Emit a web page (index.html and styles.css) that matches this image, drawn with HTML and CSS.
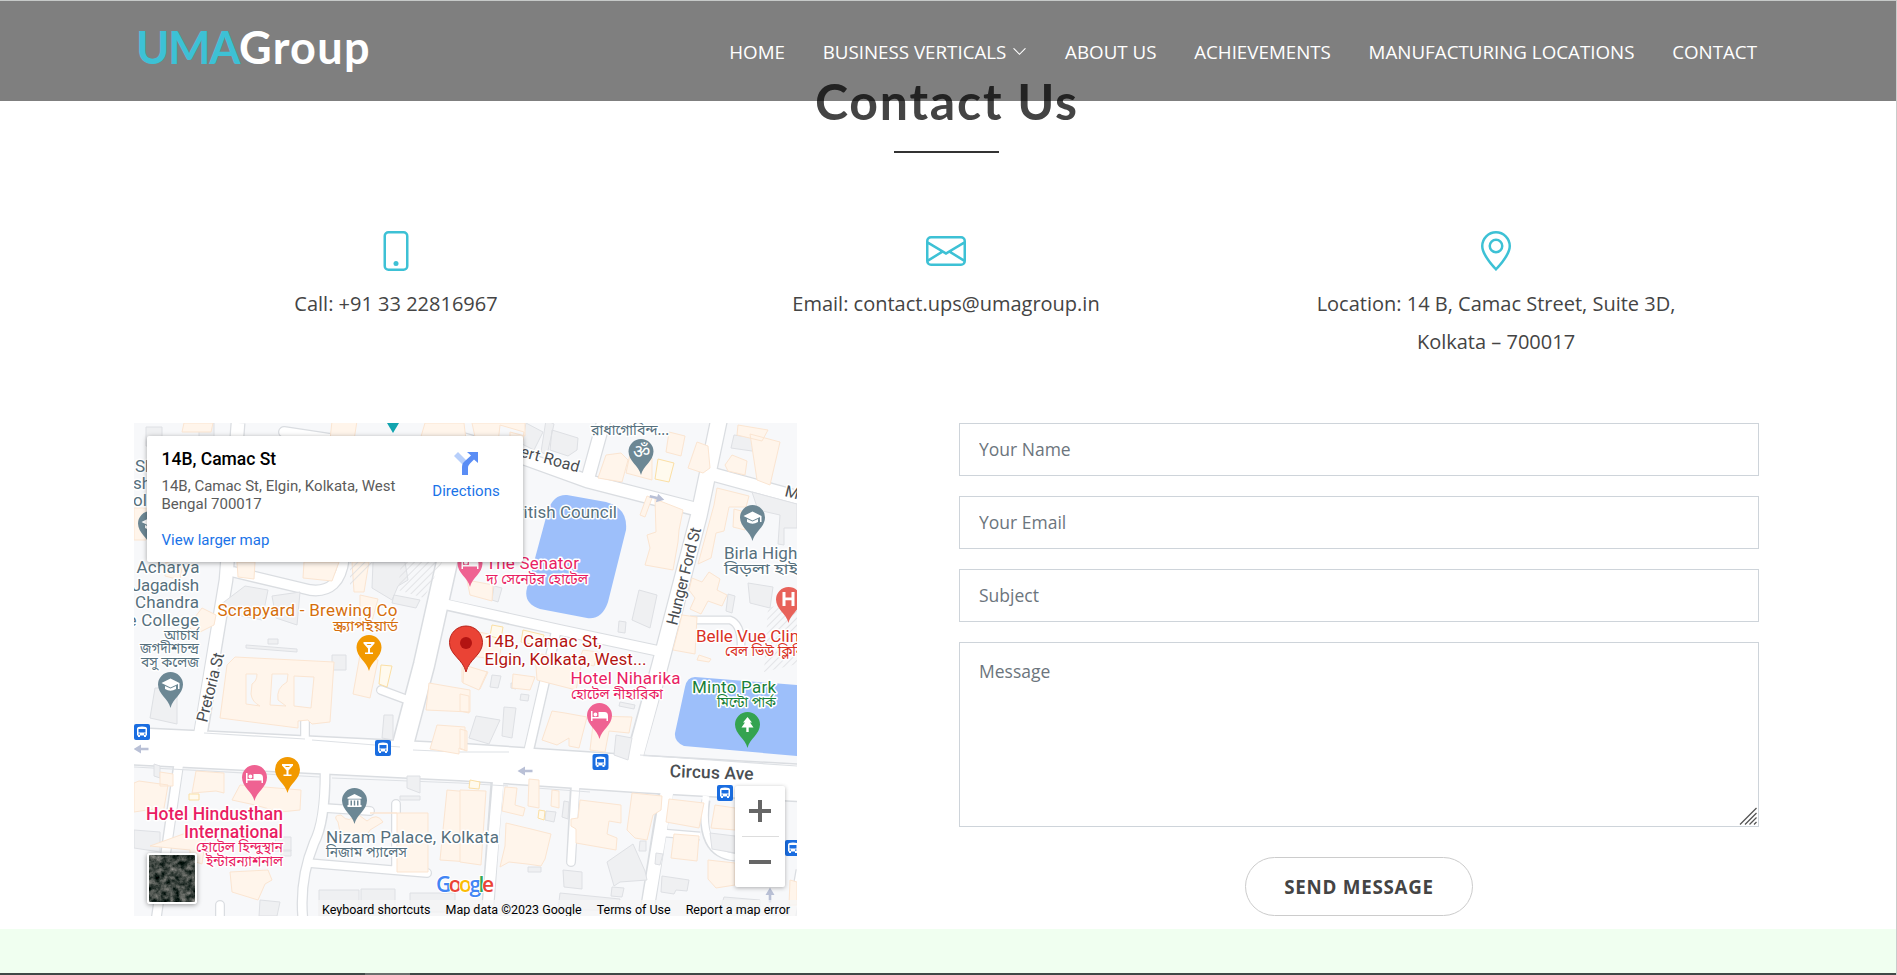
FILE: index.html
```html
<!DOCTYPE html>
<html lang="en">
<head>
<meta charset="utf-8">
<title>UMAGroup - Contact Us</title>
<link rel="stylesheet" href="styles.css">
</head>
<body>
<header class="header">
  <a class="logo"><span>UMA</span>Group</a>
  <nav class="nav">
    <a>HOME</a>
    <a class="has-menu">BUSINESS VERTICALS <svg width="15" height="15" viewBox="0 0 16 16"><path fill="none" stroke="#fff" stroke-width="1.2" stroke-linecap="round" d="M2 5l6 6 6-6"/></svg></a>
    <a>ABOUT US</a>
    <a>ACHIEVEMENTS</a>
    <a>MANUFACTURING LOCATIONS</a>
    <a>CONTACT</a>
  </nav>
</header>

<main class="contact">
  <h2 class="title"><span>Contact Us</span></h2>
  <div class="info">
    <div class="info-item">
      <svg class="icon" viewBox="0 0 16 16"><path d="M11 1a1 1 0 0 1 1 1v12a1 1 0 0 1-1 1H5a1 1 0 0 1-1-1V2a1 1 0 0 1 1-1h6zM5 0a2 2 0 0 0-2 2v12a2 2 0 0 0 2 2h6a2 2 0 0 0 2-2V2a2 2 0 0 0-2-2H5z"/><path d="M8 14a1 1 0 1 0 0-2 1 1 0 0 0 0 2z"/></svg>
      <p>Call: +91 33 22816967</p>
    </div>
    <div class="info-item">
      <svg class="icon" viewBox="0 0 16 16"><path d="M0 4a2 2 0 0 1 2-2h12a2 2 0 0 1 2 2v8a2 2 0 0 1-2 2H2a2 2 0 0 1-2-2V4Zm2-1a1 1 0 0 0-1 1v.217l7 4.2 7-4.2V4a1 1 0 0 0-1-1H2Zm13 2.383-4.708 2.825L15 11.105V5.383Zm-.034 6.876-5.64-3.471L8 9.583l-1.326-.795-5.64 3.47A1 1 0 0 0 2 13h12a1 1 0 0 0 .966-.741ZM1 11.105l4.708-2.897L1 5.383v5.722Z"/></svg>
      <p>Email: contact.ups@umagroup.in</p>
    </div>
    <div class="info-item">
      <svg class="icon" viewBox="0 0 16 16"><path d="M12.166 8.94c-.524 1.062-1.234 2.12-1.96 3.07A31.493 31.493 0 0 1 8 14.58a31.481 31.481 0 0 1-2.206-2.57c-.726-.95-1.436-2.008-1.96-3.07C3.304 7.867 3 6.862 3 6a5 5 0 0 1 10 0c0 .862-.305 1.867-.834 2.94zM8 16s6-5.686 6-10A6 6 0 0 0 2 6c0 4.314 6 10 6 10z"/><path d="M8 8a2 2 0 1 1 0-4 2 2 0 0 1 0 4zm0 1a3 3 0 1 0 0-6 3 3 0 0 0 0 6z"/></svg>
      <p>Location: 14 B, Camac Street, Suite 3D,<br>Kolkata – 700017</p>
    </div>
  </div>

  <div class="row">
    <div class="map">
      <svg class="map-canvas" width="663" height="493" viewBox="134 423 663 493">
        <defs>
          <path id="pin" d="M0 0C-2-9-12.500-14-12.500-23.500A12.500 12.500 0 1 1 12.500-23.500C12.500-14 2-9 0 0Z"/>
          <g id="bus"><rect x="-8" y="-8" width="16" height="16" rx="2" fill="#1a6de0"/><path fill="#fff" d="M-5-3.500Q-5-5.500 0-5.500T5-3.500V3.500H4V5H2V3.500H-2V5H-4V3.500H-5Z"/><path fill="#1a6de0" d="M-3.500-3h7v3.500h-7zM-3.500 1.600h1.500v1.200h-1.500zM2 1.600h1.500v1.200h-1.500z"/></g>
          <path id="cap" fill="#fff" d="M-9-25L0-29.500L9-25V-19H7.500V-24L0-20.500ZM-5.500-22L0-19.500L5.500-22V-19Q0-15.500 -5.500-19Z"/>
          <path id="bed" fill="#fff" d="M-8.500-28H-7V-22H-1V-27H5Q8.500-27 8.500-23V-18H7V-20.500H-7V-18H-8.500ZM-6-24.500a1.900 1.900 0 1 1 3.800 0a1.900 1.900 0 1 1-3.800 0Z"/>
          <path id="glass" fill="#fff" d="M-5.500-29H5.500V-27.500L1-22.500V-18.500H4V-17H-4V-18.500H-1V-22.500L-5.500-27.500ZM-2.500-27L-1.500-26H1.500L2.500-27Z"/>
          <path id="arrow" fill="#b9c0d6" d="M-7.500 0L0-4.500V-1.300H7.500V1.300H0V4.500Z"/>
          <pattern id="hatch" width="5" height="5" patternUnits="userSpaceOnUse" patternTransform="rotate(45)"><path d="M0 0V5" stroke="#dcdee1" stroke-width="1.500"/></pattern>
        </defs>
        <rect x="134" y="423" width="663" height="493" fill="#f7f8fa"/>

        <!-- road casings and fills share the same geometry -->
        <g fill="none" stroke-linejoin="round">
          <g stroke="#dadde1">
            <path stroke-width="39" d="M130 746L460 762L640 774L800 783"/>
            <path stroke-width="15" d="M238 423L226 580L201 732"/>
            <path stroke-width="12" stroke-linecap="round" d="M234 572L310 590Q340 594 344 558M284 432L390 448"/>
            <path stroke-width="23" d="M462 500L447 562L424 665L402 748"/>
            <path stroke-width="12" d="M442 604L560 630L668 653"/>
            <path stroke-width="18" d="M719 420L699 515L660 665L634 758"/>
            <path stroke-width="11" d="M556 632L529 750"/>
            <path stroke-width="15" d="M430 430L510 453L587 481L695 509M712 474L800 498M604 420L588 478"/>
            <path stroke-width="10" stroke-linecap="round" d="M381 690L405 699M305 722V738"/>
            <path stroke-width="11" d="M178 768L156 920"/>
            <path stroke-width="11" d="M325 770Q326 820 314 843Q299 880 303 920"/>
            <path stroke-width="10" stroke-linecap="round" d="M326 808L370 811M308 863L427 873M396 804V868M220 905V920"/>
            <path stroke-width="13" d="M497 782L488 905"/>
            <path stroke-width="10" stroke-linecap="round" d="M575 785L571 862"/>
            <path stroke-width="15" d="M666 790L648 905"/>
            <path stroke-width="9" d="M664 833L700 836M706 800Q698 854 735 857M690 620H730Q742 624 741 650M800 870L792 916"/>
          </g>
          <g stroke="#fff">
            <path stroke-width="36" d="M130 746L460 762L640 774L800 783"/>
            <path stroke-width="12.500" d="M238 423L226 580L199 742"/>
            <path stroke-width="9.500" stroke-linecap="round" d="M234 572L310 590Q340 594 344 558M284 432L390 448"/>
            <path stroke-width="20" d="M462 500L447 562L424 665L400 756"/>
            <path stroke-width="9.500" d="M440 603L560 630L668 653"/>
            <path stroke-width="15.500" d="M719 420L699 515L660 665L632 768"/>
            <path stroke-width="8.500" d="M556 632L526 762"/>
            <path stroke-width="12.500" d="M430 430L510 453L587 481L700 510M708 473L800 498M604 420L588 478"/>
            <path stroke-width="7.500" stroke-linecap="round" d="M381 690L408 700M305 722V742"/>
            <path stroke-width="8.500" d="M180 756L156 920M325 762Q326 820 314 843Q299 880 303 920"/>
            <path stroke-width="7.500" stroke-linecap="round" d="M324 808L370 811M308 863L427 873M396 804V868M220 905V920"/>
            <path stroke-width="10.500" d="M499 772L488 905"/>
            <path stroke-width="7.500" stroke-linecap="round" d="M576 780L571 862"/>
            <path stroke-width="12.500" d="M669 780L648 905"/>
            <path stroke-width="6.500" d="M664 833L700 836M706 796Q698 854 735 857M688 620H730Q742 624 741 650M800 870L792 916"/>
          </g>
        </g>
        <g fill="none" stroke="#dee1e5" stroke-width="1.200">
          <path d="M204 733L305 739M312 740L400 747M134 767L320 777M332 778L460 783L508 786M536 788L590 792M413 750L460 752H509M640 755L797 766"/>
        </g>

        <g fill="#eff0f2" stroke="#dee0e4">
          <path d="M146 427H162V446H146ZM199 423H214V470H199ZM220 605L245 586L268 590L262 620L236 615ZM272 596L300 592L297 625L276 618ZM373 562H405L408 580L398 586L392 600L372 588ZM394 595L420 600L416 608L392 603ZM332 655H346V670H332ZM246 645L297 649V652L246 648ZM268 639H278V644H268Z"/>
          <path d="M552 430L578 438L577 450L568 456L550 450ZM546 420L554 424L547 455L541 452ZM526 423L543 432L534 450L522 444Z"/>
          <path d="M734 435L762 439L759 452L731 448ZM752 492L797 504V528H784V545L778 544L780 515L758 510ZM639 590L657 595L650 628L632 620ZM748 583L773 587L770 608L750 603ZM728 594L735 596L732 613L726 611ZM619 621L626 622L625 633L618 632ZM494 586L502 588L498 602L492 600Z"/>
          <path d="M155 688H177V724L150 718ZM384 715H393V740L382 738ZM154 764L160 766V778L154 776ZM407 776H420V793L407 788ZM400 796H420V800H400ZM476 716L500 720L489 744L469 738ZM504 707L516 708L512 738L502 736ZM492 675L501 676L498 688L490 687ZM616 735L632 738L628 760L614 755ZM620 702L635 705L634 709L619 706ZM511 683L517 684L516 689L511 688ZM521 694L529 695L528 701L520 700Z"/>
          <path d="M607 862L633 844L645 871L647 880L620 882L614 886ZM546 811L556 812L554 822L545 820ZM564 801L569 802L568 819L562 817ZM640 841H646V851H639ZM656 853L663 854L660 865L655 864ZM563 870L582 872V889L564 887ZM528 867H541V872H528ZM612 887L624 888L622 897L611 896ZM662 876L689 880L687 891L676 890L674 894L661 892ZM560 893L620 899L617 910H558ZM319 890H359V916H319ZM361 889H395V916H361ZM410 893H455V912H410ZM724 897L760 900V910H720ZM260 900L280 902L277 916H259ZM281 850H291V856H281ZM276 837H291V851H274ZM710 833L735 836V853L712 849ZM134 830L160 832V852L134 848Z"/>
        </g>

        <g fill="#fff5eb" stroke="#fbe5d1">
          <path d="M332 421H357L354 440H330ZM425 423H464L466 440H420ZM472 423L477 446L510 448V432L525 436V423ZM184 423H213L211 432H182ZM134 508H146V540H134ZM500 425L524 432L520 460L497 452Z"/>
          <path d="M237 562H255L254 579L238 577ZM304 562H339L332 581L303 578ZM352 562H369L364 592H354ZM360 595L378 599L370 628H360ZM202 608L216 615L214 625L196 634L188 626ZM166 562L182 567L180 580L165 576Z"/>
          <path d="M669 432L685 436L681 456L666 452ZM708 446L697 442L688 468L703 473L710 468ZM738 425L768 430L762 441L737 435ZM750 434L780 442L770 485L757 480ZM732 455L747 461L745 475L728 471L725 465ZM628 460L621 453L606 455L598 478L622 482ZM630 454L652 458V480L626 473Z"/>
          <path d="M655 499L683 510L679 530L678 542L673 570L645 565L650 548L647 535L656 532ZM647 496L652 498L645 517L640 515ZM717 488L749 496L746 507L729 507L724 531L716 533L711 558L698 564L714 505ZM734 509L745 512V530L733 527ZM692 578L702 582L709 572L720 579L717 590L727 595L722 606L708 601L701 614L690 609L695 598L689 590Z"/>
          <path d="M682 615L697 617L695 654L673 650ZM493 585L467 580L470 595L492 601ZM469 630L503 637L499 660L465 655ZM583 650L598 652L594 666L578 662ZM535 653L582 661L576 690L537 680ZM699 655L711 659L709 662L697 660ZM462 667L488 672L480 689L462 682Z"/>
          <path fill-rule="evenodd" d="M227 665L235 657L334 662L330 722L312 724L308 720L298 721V728L220 718ZM246 674H257Q257 681 252 684L251 694Q252 702 260 706L246 704ZM272 674H288L287 682Q276 688 278 700L286 706L270 705ZM294 676L314 677L311 708L294 706Z"/>
          <path d="M360 655L378 660L370 698L353 694ZM429 683L452 687L470 690V712L426 710ZM437 725L465 727V750L459 748V754L430 749ZM464 665L487 672L479 690L463 683ZM460 694L469 696V713L460 711ZM460 729L467 731V751L460 749ZM513 674L535 677L530 690L512 688ZM552 711L565 713L587 717L579 748L569 746V738L557 745L542 740ZM594 716L632 717L629 733L609 731L605 752L590 750Z"/>
          <path d="M160 772L173 774V786H160ZM196 771L224 773V793L216 791L192 793ZM139 781L168 785L163 814L154 809L134 812V783ZM240 785L301 790L300 810L280 812L255 805L232 800ZM338 822Q332 815 341 815Q350 825 356 813L367 821Q377 812 383 822L370 830L365 838L340 832ZM370 813H428V872H397V813ZM447 790L470 792V862L440 860ZM186 833L206 835L202 864L190 860V850L150 846ZM230 872L268 870L272 880L265 884L258 900L232 892Z"/>
          <path d="M460 790L486 791L481 865L460 862ZM505 787L517 788L515 805L525 808L523 816L502 811ZM529 779L539 780V808L528 806ZM552 790L559 791V808L551 806ZM632 793L662 796L661 810L653 815L647 840L635 838L627 830L630 808ZM580 800L621 805V823L609 821L607 834L617 838L616 850L576 843V829L571 826V819L578 818ZM669 799L704 803L699 828L666 822ZM674 834L699 836L697 861L671 858ZM715 805L735 808V830L711 828ZM506 823L531 829L551 834L545 859L541 866L527 864L509 862L500 867L505 846ZM708 860L735 863V885L716 888L708 879ZM790 880L797 882V905H789Z"/>
        </g>
        <g fill="#fffaee" stroke="#fbdfa4">
          <path d="M658 459L674 463L669 482L655 479ZM492 625L503 627L501 639L490 636ZM523 630L544 635L541 646L521 642ZM381 665L392 666L387 687L379 684ZM189 794H199V800H189ZM470 780L480 782L479 789L469 788ZM539 810L545 811L544 820L538 818Z"/>
        </g>
        <path fill="url(#hatch)" d="M350 562H376L350 590ZM401 562H442L424 598L398 590ZM768 608L797 600V664L764 672Z"/>

        <g fill="#9dbffa">
          <path d="M548 510Q554 494 567 495L606 502Q628 508 626 530L608 602Q602 620 587 618L540 609Q523 603 527 588Z"/>
          <path d="M685 687Q687 677 695 677L797 685V756L684 746Q674 742 675 733Z"/>
        </g>

        <use href="#arrow" transform="translate(141 749)"/>
        <use href="#arrow" transform="translate(525 771)"/>
        <use href="#arrow" transform="translate(657 498) rotate(194)"/>
        <use href="#arrow" transform="translate(770 895) rotate(90)"/>

        <g class="lbl slate">
          <text x="135" y="472">Sh</text><text x="133" y="489">sh</text><text x="133" y="506">ol</text>
          <text x="136.500" y="573" textLength="63">Acharya</text>
          <text x="132" y="590.500" textLength="67">Jagadish</text>
          <text x="135" y="608" textLength="64">Chandra</text>
          <text x="127.500" y="625.500" textLength="71.500">e College</text>
          <text x="507" y="517.500" textLength="110">British Council</text>
          <text x="724" y="559">Birla High School</text>
          <text x="326" y="843" textLength="173">Nizam Palace, Kolkata</text>
        </g>
        <g class="lbl bn slate">
          <text x="164" y="640" textLength="35" lengthAdjust="spacingAndGlyphs">আচার্য</text>
          <text x="140" y="653" textLength="59" lengthAdjust="spacingAndGlyphs">জগদীশচন্দ্র</text>
          <text x="141" y="667" textLength="58" lengthAdjust="spacingAndGlyphs">বসু কলেজ</text>
          <text x="591" y="435" textLength="78" lengthAdjust="spacingAndGlyphs">রাধাগোবিন্দ...</text>
          <text x="724" y="574" textLength="92" lengthAdjust="spacingAndGlyphs">বিড়লা হাই স্কুল</text>
          <text x="326" y="857" textLength="81" lengthAdjust="spacingAndGlyphs">নিজাম প্যালেস</text>
        </g>
        <g class="lbl road">
          <text transform="translate(497 450) rotate(15.500)" textLength="84">Albert Road</text>
          <text transform="translate(677 626) rotate(-76)" textLength="100">Hunger Ford St</text>
          <text transform="translate(207 723) rotate(-76)" textLength="71">Pretoria St</text>
          <text transform="translate(784 496) rotate(14)">Moira St</text>
          <text class="big" transform="translate(669.500 777) rotate(2)" textLength="84">Circus Ave</text>
        </g>
        <g class="lbl orange"><text x="217.500" y="615.500" textLength="180">Scrapyard - Brewing Co</text>
          <text class="bn" x="333" y="630.500" textLength="65" lengthAdjust="spacingAndGlyphs">স্ক্র্যাপইয়ার্ড</text></g>
        <g class="lbl pink">
          <text x="486" y="569" textLength="93">The Senator</text>
          <text class="bn" x="486" y="583.500" textLength="102" lengthAdjust="spacingAndGlyphs">দ্য সেনেটর হোটেল</text>
          <text x="570.500" y="683.500" textLength="110">Hotel Niharika</text>
          <text class="bn" x="571" y="698.500" textLength="92" lengthAdjust="spacingAndGlyphs">হোটেল নীহারিকা</text>
          <g class="strong"><text x="146" y="820" textLength="137">Hotel Hindusthan</text><text x="184" y="837.500" textLength="99">International</text></g>
          <text class="bn" x="196" y="852" textLength="87" lengthAdjust="spacingAndGlyphs">হোটেল হিন্দুস্থান</text>
          <text class="bn" x="206" y="866" textLength="77" lengthAdjust="spacingAndGlyphs">ইন্টারন্যাশনাল</text>
        </g>
        <g class="lbl red"><text x="696" y="641.500">Belle Vue Clinic</text>
          <text class="bn" x="725" y="656" textLength="90" lengthAdjust="spacingAndGlyphs">বেল ভিউ ক্লিনিক</text></g>
        <g class="lbl green"><text x="692" y="692.500" textLength="84">Minto Park</text>
          <text class="bn" x="717" y="707" textLength="59" lengthAdjust="spacingAndGlyphs">মিন্টো পার্ক</text></g>
        <g class="lbl crimson"><text x="484.500" y="647" textLength="117">14B, Camac St,</text><text x="484.500" y="664.500" textLength="162">Elgin, Kolkata, West...</text></g>

        <g transform="translate(641 475)"><use href="#pin" fill="#6c8794"/><text class="om" y="-17" text-anchor="middle">ॐ</text></g>
        <g transform="translate(752.500 541)"><use href="#pin" fill="#6c8794"/><use href="#cap"/></g>
        <g transform="translate(170.500 708)"><use href="#pin" fill="#6c8794"/><use href="#cap"/></g>
        <g transform="translate(150.500 547)"><use href="#pin" fill="#6c8794"/><use href="#cap"/></g>
        <g transform="translate(354.500 824)"><use href="#pin" fill="#6c8794"/><path fill="#fff" d="M0-30L7-26.500V-25.300H-7V-26.500ZM-6-24.500H6V-19H7V-17H-7V-19H-6ZM-4-23.500V-18.500H-2.500V-23.500ZM-.7-23.500V-18.500H.7V-23.500ZM2.500-23.500V-18.500H4V-23.500Z" fill-rule="evenodd"/></g>
        <g transform="translate(470 587)"><use href="#pin" fill="#ef6292"/><use href="#bed"/></g>
        <g transform="translate(254.500 801)"><use href="#pin" fill="#ef6292"/><use href="#bed"/></g>
        <g transform="translate(599.500 739)"><use href="#pin" fill="#ef6292"/><use href="#bed"/></g>
        <g transform="translate(369 671)"><use href="#pin" fill="#f29900"/><use href="#glass"/></g>
        <g transform="translate(287.500 793)"><use href="#pin" fill="#f29900"/><use href="#glass"/></g>
        <g transform="translate(788.500 623)"><use href="#pin" fill="#e8625a"/><path fill="#fff" d="M-6-31H-3V-25.500H3V-31H6V-17H3V-22.700H-3V-17H-6Z"/></g>
        <g transform="translate(747.500 748)"><use href="#pin" fill="#34a350"/><path fill="#fff" d="M0-31L4.500-25.500H2.500L6-20.500H1.200V-16H-1.200V-20.500H-6L-2.500-25.500H-4.500Z"/></g>
        <path fill="#12a4af" d="M387 423H399L393 433Z"/>
        <path fill="#ea4335" stroke="#b9231a" d="M466 672C463 659 449.500 655 449.500 642.500A16.500 16.500 0 0 1 482.500 642.500C482.500 655 469 659 466 672Z"/>
        <circle cx="466" cy="643" r="6" fill="#b31412"/>

        <use href="#bus" x="142" y="732"/><use href="#bus" x="383" y="748"/><use href="#bus" x="600.500" y="762"/><use href="#bus" x="725" y="793"/><use href="#bus" x="793" y="848"/>

        <text class="google" x="436" y="891.500" textLength="58"><tspan fill="#4285f4">G</tspan><tspan fill="#ea4335">o</tspan><tspan fill="#fbbc05">o</tspan><tspan fill="#4285f4">g</tspan><tspan fill="#34a853">l</tspan><tspan fill="#ea4335">e</tspan></text>
      </svg>

      <div class="place-card">
        <div class="place-text">
          <strong>14B, Camac St</strong>
          <p>14B, Camac St, Elgin, Kolkata, West Bengal 700017</p>
          <a>View larger map</a>
        </div>
        <div class="place-dir">
          <svg width="26" height="24" viewBox="0 0 26 24"><path fill="#b7cffb" d="M1 4L5 0L13 8V15L10 13Z"/><path fill="#5a8df5" d="M14 0H25V11L21 7.500L17 11.500Q15 13.500 15 16V23H9V15Q9 11 12 9L18 3.500Z"/></svg>
          <a>Directions</a>
        </div>
      </div>

      <div class="satellite">
        <svg width="46" height="47" viewBox="0 0 46 47">
          <filter id="terrain" x="0" y="0" width="100%" height="100%" color-interpolation-filters="sRGB"><feTurbulence type="fractalNoise" baseFrequency=".16" numOctaves="4" seed="8"/><feColorMatrix values=".9 0 0 0 -.2  .8 0 0 0 -.12  .8 0 0 0 -.14  0 0 0 0 1"/></filter>
          <rect width="46" height="47" filter="url(#terrain)"/>
        </svg>
      </div>
      <div class="zoom"><span class="plus"></span><i></i><span class="minus"></span></div>
      <div class="credits"><span>Keyboard shortcuts</span><span>Map data ©2023 Google</span><span>Terms of Use</span><span>Report a map error</span></div>
    </div>

    <form class="form">
      <input type="text" placeholder="Your Name">
      <input type="text" placeholder="Your Email">
      <input type="text" placeholder="Subject">
      <div class="message">
        <textarea placeholder="Message"></textarea>
        <svg class="grip" width="18" height="18" viewBox="0 0 18 18"><path stroke="#555" stroke-width="1.300" d="M1 17.500L17.500 1M6 17.500L17.500 6M10.500 17.500L17.500 10.500M15 17.500L17.500 15"/></svg>
      </div>
      <button type="button">SEND MESSAGE</button>
    </form>
  </div>
</main>
<footer class="footer"><div class="taskbar"><span></span></div></footer>
</body>
</html>
```

FILE: styles.css
```css
* { box-sizing: border-box; }
html, body { margin: 0; height: 975px; overflow: hidden; }
body {
  position: relative;
  display: flex;
  flex-direction: column;
  background: #fff;
  color: #444;
  font-family: "Open Sans", sans-serif;
  border-top: 1px solid #c6c9c8;
}
body::after {
  content: "";
  position: absolute;
  right: 0; top: 0; bottom: 0;
  width: 1px;
  background: #c9cccb;
}
.header {
  position: absolute;
  inset: 0 1px auto 0;
  z-index: 2;
  height: 100px;
  padding: 0 139px 0 136px;
  display: flex;
  align-items: center;
  justify-content: space-between;
  background: rgba(0, 0, 0, .5);
}
.logo {
  font: 700 45px/54px Lato, sans-serif;
  letter-spacing: 1.3px;
  color: #fff;
  padding-bottom: 9px;
}
.logo span { color: #3dc1d5; letter-spacing: -1.4px; }
.nav {
  display: flex;
  gap: 37.7px;
  font-size: 18.75px;
  line-height: 26px;
  color: #fff;
  white-space: nowrap;
  padding-top: 1px;
}
.has-menu { display: flex; align-items: center; gap: 6px; }

.contact {
  width: 1650px;
  margin-left: 121px;
  height: 928px;
  padding-top: 70px;
}
.title {
  margin: 0;
  font: 700 50px/60px Lato, sans-serif;
  text-align: center;
  color: #444;
  display: flex;
  flex-direction: column;
  align-items: center;
}
.title span { letter-spacing: 1.8px; margin-right: -1.8px; }
.title::after {
  content: "";
  width: 105px;
  height: 2px;
  margin-top: 20px;
  background: #333;
}
.info { display: flex; height: 192px; margin-top: 78px; }
.info-item {
  width: 550px;
  display: flex;
  flex-direction: column;
  align-items: center;
  text-align: center;
}
.icon { width: 40px; height: 40px; fill: #3dc1d5; }
.info p { margin: 14px 0 0; font-size: 20px; line-height: 38px; }

.row { display: flex; justify-content: space-between; padding: 0 12px 0 13px; }
.map { position: relative; width: 663px; height: 493px; overflow: hidden; font-family: Roboto, sans-serif; }
.map-canvas { display: block; }
.lbl { font: 17px Roboto, sans-serif; }
.lbl text { paint-order: stroke; stroke: #fff; stroke-width: 3px; stroke-linejoin: round; }
.lbl.bn, .lbl .bn { font: 14px "Noto Sans Bengali", Roboto, sans-serif; }
.slate { fill: #56707d; }
.road { fill: #4a4e52; font-size: 16px; }
.road .big { font-size: 17.5px; font-weight: 500; }
.orange { fill: #d56e0c; }
.pink { fill: #e91e63; }
.strong { font-weight: 500; font-size: 17.5px; }
.red { fill: #d93025; }
.green { fill: #188038; }
.crimson { fill: #b31412; }
.om { font: 19px sans-serif; fill: #fff; }
.google { font: 600 21px "Open Sans", sans-serif; paint-order: stroke; stroke: #fff; stroke-width: 2px; }

.place-card {
  position: absolute;
  left: 13px; top: 13px;
  width: 376px; height: 126px;
  padding: 13px 15px 13px 14.5px;
  display: flex;
  justify-content: space-between;
  background: #fff;
  border-radius: 2px;
  box-shadow: 0 1px 5px rgba(0, 0, 0, .35);
  font-size: 15px;
  line-height: 18px;
}
.place-text { width: 245px; }
.place-text strong { display: block; color: #000; font-weight: 500; font-size: 17.5px; line-height: 20px; }
.place-text p { margin: 8px 0 18px; color: #5b5b5b; }
.place-card a { color: #1a73e8; }
.place-dir { display: flex; flex-direction: column; align-items: center; width: 84px; padding-top: 3px; gap: 6px; }
.satellite {
  position: absolute;
  left: 13px; bottom: 12px;
  width: 50px; height: 51px;
  border: 2px solid #fff;
  border-radius: 3px;
  box-shadow: 0 1px 5px rgba(0, 0, 0, .4);
  overflow: hidden;
}
.satellite svg { display: block; }
.zoom {
  position: absolute;
  right: 12px; top: 363px;
  width: 50px; height: 101px;
  display: flex;
  flex-direction: column;
  align-items: center;
  background: #fff;
  border-radius: 2px;
  box-shadow: 0 1px 4px rgba(0, 0, 0, .3);
}
.zoom i { width: 37px; height: 1px; background: #ddd; }
.zoom span { width: 22px; height: 50px; }
.plus { background: linear-gradient(#666, #666) center / 22px 4px no-repeat, linear-gradient(#666, #666) center / 4px 22px no-repeat; }
.minus { background: linear-gradient(#666, #666) center / 22px 4px no-repeat; }
.credits {
  position: absolute;
  right: 0; bottom: 0;
  height: 16px;
  padding: 0 7px 0 4px;
  display: flex;
  gap: 15px;
  background: rgba(245, 245, 245, .75);
  font-size: 12.5px;
  line-height: 19px;
  color: #000;
  white-space: nowrap;
}

.form { width: 800px; display: flex; flex-direction: column; gap: 20px; }
.form input, .form textarea {
  display: block;
  width: 100%;
  height: 53px;
  padding: 0 19px 1px;
  border: 1px solid #ced4da;
  border-radius: 0;
  outline: 0;
  font: 17.5px/26px "Open Sans", sans-serif;
  background: #fff;
}
.form textarea { height: 185px; padding-top: 15px; resize: none; }
.form ::placeholder { color: #6c757d; opacity: 1; }
.message { position: relative; }
.grip { position: absolute; right: 2px; bottom: 2px; }
.form button {
  align-self: center;
  width: 228px;
  height: 59px;
  margin-top: 10px;
  border: 1px solid #ccc;
  border-radius: 30px;
  background: #fff;
  color: #444;
  font: 700 18.75px "Open Sans", sans-serif;
  letter-spacing: .75px;
}
.footer {
  flex: 1;
  display: flex;
  align-items: flex-end;
  background: #f0fff0;
}
.taskbar { width: 100%; height: 2px; background: #404846; padding-left: 365px; }
.taskbar span { display: block; width: 45px; height: 2px; background: #6c706e; }
```
